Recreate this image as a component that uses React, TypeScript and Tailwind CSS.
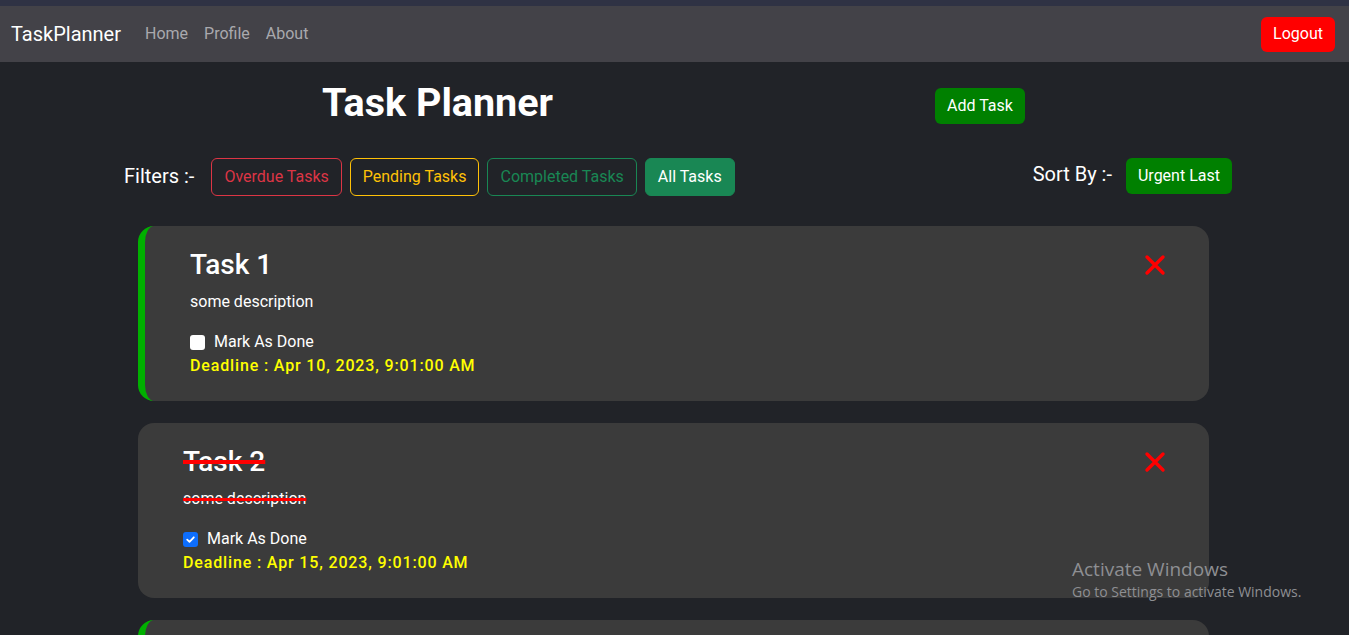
import React from "react";

const font = { fontFamily: "Roboto, 'Liberation Sans', sans-serif" };

function XIcon() {
  return (
    <svg width="22" height="22" viewBox="0 0 22 22" className="shrink-0">
      <path d="M3 3 L19 19 M19 3 L3 19" stroke="#ff0000" strokeWidth="3.4" strokeLinecap="round" />
    </svg>
  );
}

function Checkbox({ checked }: { checked: boolean }) {
  if (checked) {
    return (
      <span className="w-[15px] h-[15px] rounded-[3px] bg-[#0d6efd] flex items-center justify-center shrink-0">
        <svg width="11" height="11" viewBox="0 0 11 11">
          <path d="M2.2 5.6 L4.5 7.8 L8.8 3.3" stroke="#fff" strokeWidth="1.8" fill="none" strokeLinecap="round" strokeLinejoin="round" />
        </svg>
      </span>
    );
  }
  return <span className="w-[15px] h-[15px] rounded-[3px] bg-white shrink-0" />;
}

function TaskCard({
  title,
  done,
  deadline,
  border,
}: {
  title: string;
  done: boolean;
  deadline: string;
  border: boolean;
}) {
  return (
    <div
      className={
        "w-[1071px] rounded-[16px] bg-[#3b3b3b] flex items-start pt-[22px] pb-[23px] pr-[43px] pl-[45px] " +
        (border ? "border-l-[7px] border-[#00b000]" : "")
      }
    >
      <div className="flex-1 flex flex-col">
        <div
          className={
            "text-[28px] leading-[34px] font-medium text-white mb-[8px] self-start " +
            (done ? "line-through decoration-[#ff0000] decoration-[4px]" : "")
          }
        >
          {title}
        </div>
        <div
          className={
            "text-[16px] leading-[24px] text-white mb-[16px] self-start " +
            (done ? "line-through decoration-[#ff0000] decoration-[3px]" : "")
          }
        >
          some description
        </div>
        <div className="flex items-center gap-[9px] text-[16px] leading-[24px] text-white">
          <Checkbox checked={done} />
          <span>Mark As Done</span>
        </div>
        <div className="text-[16px] leading-[24px] font-medium text-[#ffff00] tracking-[0.85px]">
          {deadline}
        </div>
      </div>
      <div className="mt-[6px]">
        <XIcon />
      </div>
    </div>
  );
}

export default function App() {
  return (
    <div className="relative h-[635px] bg-[#212328] overflow-hidden" style={font}>
      <div className="h-[6px] bg-[#2f3244]" />
      <nav className="h-[56px] bg-[#434248] flex items-center pl-[11px] pr-[14px]">
        <span className="text-[20px] text-white leading-[30px]">TaskPlanner</span>
        <div className="flex items-center ml-[16px] text-[16px] text-[#a9a9ae]">
          <span className="px-[8px]">Home</span>
          <span className="px-[8px]">Profile</span>
          <span className="px-[8px]">About</span>
        </div>
        <button className="ml-auto bg-[#ff0000] text-white text-[16px] leading-[24px] px-[12px] py-[5.5px] rounded-[6px]">
          Logout
        </button>
      </nav>

      <div className="flex items-center mt-[17px] pl-[322px]">
        <h1 className="text-[39.5px] leading-[48px] font-bold text-white w-[613px]">Task Planner</h1>
        <button className="mt-[6px] bg-[#008000] text-white text-[16px] leading-[24px] px-[12px] py-[6px] rounded-[6px]">
          Add Task
        </button>
      </div>

      <div className="flex items-start mt-[31px] pl-[124px]">
        <span className="text-[20px] text-white mr-[17px] leading-[30px] mt-[3px]">Filters :-</span>
        <div className="flex gap-[8px] text-[16px] leading-[24px]">
          <button className="border border-[#dc3545] text-[#dc3545] px-[12px] py-[6px] rounded-[6px]">Overdue Tasks</button>
          <button className="border border-[#ffc107] text-[#ffc107] px-[12px] py-[6px] rounded-[6px]">Pending Tasks</button>
          <button className="border border-[#198754] text-[#198754] px-[12px] py-[6px] rounded-[6px]">Completed Tasks</button>
          <button className="border border-[#198754] bg-[#198754] text-white px-[12px] py-[6px] rounded-[6px]">All Tasks</button>
        </div>
        <span className="text-[20px] text-white ml-[298px] mr-[14px] leading-[30px] mt-[1px]">Sort By :-</span>
        <button className="bg-[#008000] text-white text-[16px] leading-[24px] px-[12px] py-[6px] rounded-[6px]">
          Urgent Last
        </button>
      </div>

      <div className="flex flex-col gap-[22px] mt-[30px] pl-[138px]">
        <TaskCard title="Task 1" done={false} deadline="Deadline : Apr 10, 2023, 9:01:00 AM" border />
        <TaskCard title="Task 2" done deadline="Deadline : Apr 15, 2023, 9:01:00 AM" border={false} />
        <div className="w-[1071px] h-[175px] rounded-[16px] bg-[#3b3b3b] border-l-[7px] border-[#00b000]" />
      </div>

      <div
        className="absolute left-[1072px] top-[556px] text-[#8e8f93] pointer-events-none"
        style={{ fontFamily: "'Open Sans', 'Noto Sans', sans-serif" }}
      >
        <div className="text-[19px] leading-[26px]">Activate Windows</div>
        <div className="text-[14px] leading-[20px]">Go to Settings to activate Windows.</div>
      </div>
    </div>
  );
}
